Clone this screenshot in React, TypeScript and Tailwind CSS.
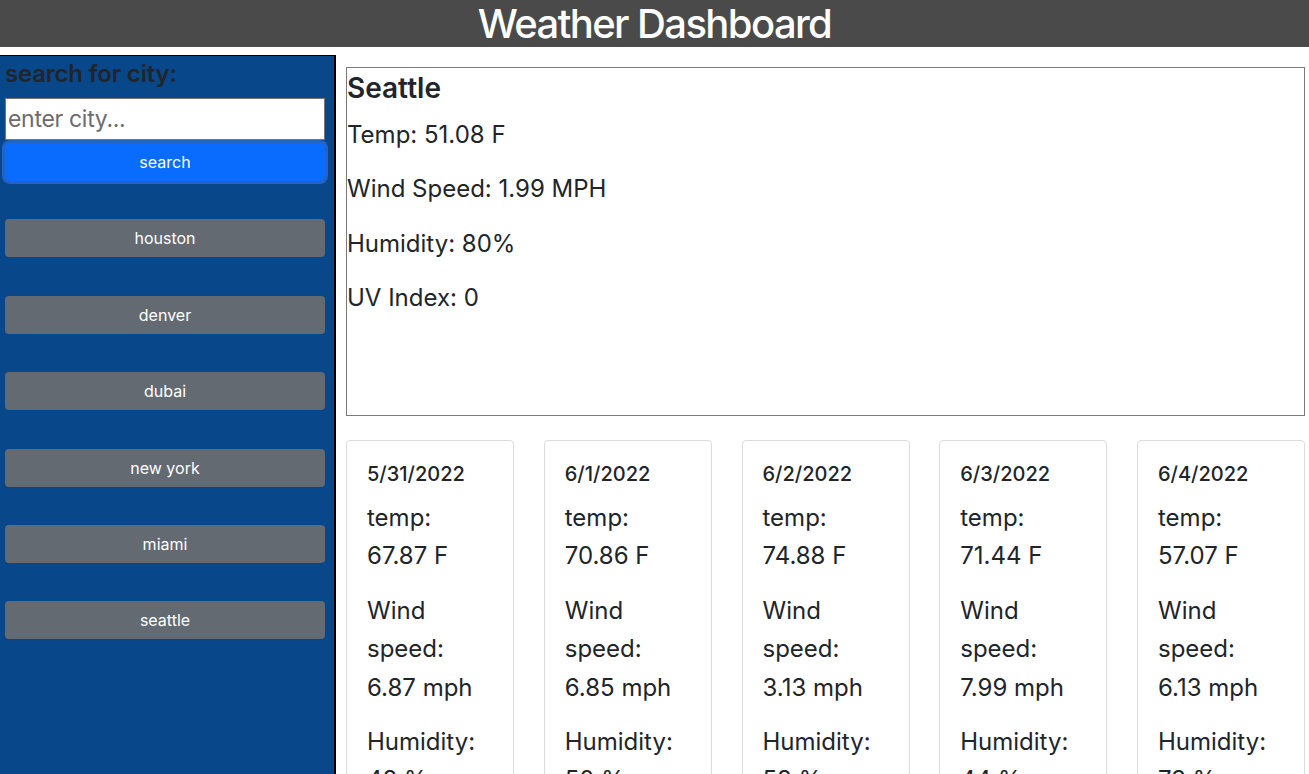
const cities = ["houston", "denver", "dubai", "new york", "miami", "seattle"]

const forecast = [
	{ date: "5/31/2022", temp: "67.87 F", wind: "6.87 mph", humidity: "48 %" },
	{ date: "6/1/2022", temp: "70.86 F", wind: "6.85 mph", humidity: "50 %" },
	{ date: "6/2/2022", temp: "74.88 F", wind: "3.13 mph", humidity: "58 %" },
	{ date: "6/3/2022", temp: "71.44 F", wind: "7.99 mph", humidity: "44 %" },
	{ date: "6/4/2022", temp: "57.07 F", wind: "6.13 mph", humidity: "73 %" },
]

export default function App() {
	return (
		<div
			className="min-h-screen bg-white text-[#212529] overflow-hidden h-[774px]"
			style={{ fontFamily: "Inter, 'Noto Sans', sans-serif" }}>
			<header className="bg-[#4a4a4a] h-[47px] flex items-center justify-center">
				<h1 className="text-white text-[40px] font-medium leading-[47px] tracking-[-1.6px]">
					Weather Dashboard
				</h1>
			</header>

			<div className="flex mt-[8px]">
				<aside className="w-[336px] shrink-0 bg-[#08488a] border-t border-r-2 border-black h-[800px] px-[5px] pt-[4px]">
					<h4 className="text-[24px] font-semibold leading-[28px] text-[#212529] tracking-[-0.2px]">
						search for city:
					</h4>
					<input
						placeholder="enter city..."
						className="mt-[10px] block w-[320px] h-[42px] bg-white border border-[#767676] px-[2px] text-[23px] tracking-[-0.3px] placeholder:text-[#6c6c6c] outline-none"
					/>
					<button className="mt-[3px] block w-[320px] h-[38px] rounded-[5px] bg-[#0a6bff] text-white text-[16px] ring-[3px] ring-[#2264c4]">
						search
					</button>
					<div className="flex flex-col">
						{cities.map((city) => (
							<button
								key={city}
								className="mt-[38.4px] block w-[320px] h-[38px] rounded-[4px] bg-[#646a71] text-white text-[16px]">
								{city}
							</button>
						))}
					</div>
				</aside>

				<main className="flex-1 pl-[10px] pr-[4px] pt-[12px]">
					<section className="border border-[#7a7a7a] h-[349px]">
						<h3 className="text-[28px] font-semibold leading-[34px] mt-[3px]">
							Seattle
						</h3>
						<div className="text-[24px] leading-[38.4px] mt-[11px] flex flex-col gap-[16px]">
							<p>Temp: 51.08 F</p>
							<p>Wind Speed: 1.99 MPH</p>
							<p>Humidity: 80%</p>
							<p>UV Index: 0</p>
						</div>
					</section>

					<div className="flex justify-between mt-[24px]">
						{forecast.map((day) => (
							<div
								key={day.date}
								className="w-[168px] h-[400px] border border-[#dcdcdc] rounded-[4px] pl-[20px] pr-[10px] pt-[21px]">
								<h5 className="text-[20px] font-medium leading-[24px]">
									{day.date}
								</h5>
								<div className="mt-[13px] text-[24px] leading-[38.4px] flex flex-col gap-[16px]">
									<p>
										temp:
										<br />
										{day.temp}
									</p>
									<p>
										Wind
										<br />
										speed:
										<br />
										{day.wind}
									</p>
									<p>
										Humidity:
										<br />
										{day.humidity}
									</p>
								</div>
							</div>
						))}
					</div>
				</main>
			</div>
		</div>
	)
}
